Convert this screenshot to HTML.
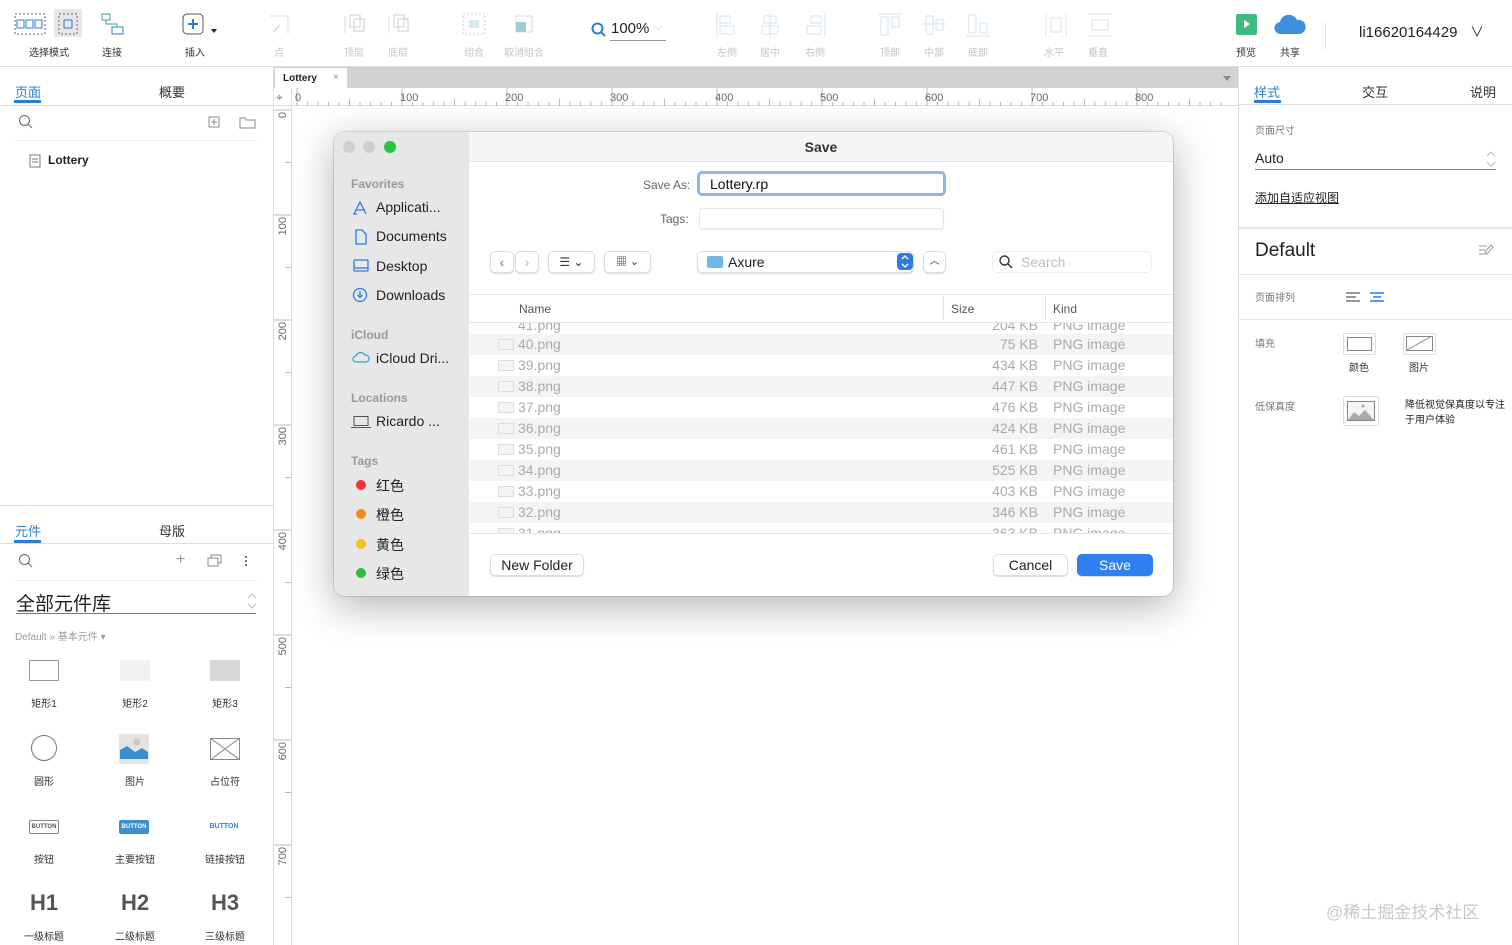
<!DOCTYPE html>
<html><head><meta charset="utf-8"><style>
*{margin:0;padding:0;box-sizing:border-box}
body{width:1512px;height:945px;overflow:hidden;background:#fff;font-family:"Liberation Sans","Noto Sans CJK SC",sans-serif;position:relative;color:#333}
.a{position:absolute}
.tl{position:absolute;font-size:10px;color:#333;text-align:center;width:60px}
.tl.g{color:#c4c4c4}
.ic{position:absolute}
.row{position:absolute;left:470px;width:703px;height:21px;font-size:14px;color:#aaa}
.row span{position:absolute;top:2px}
.row span.s{right:135px;text-align:right}
.fi{position:absolute;left:28px;top:5px;width:16px;height:11px;border:1px solid #ddd;background:#f4f4f4}
.sb{position:absolute;left:17px;font-size:14px;color:#222}
.sh{position:absolute;left:17px;font-size:12px;color:#999;font-weight:bold}
.btn{position:absolute;background:#fff;border:1px solid #ddd;border-radius:5px;box-shadow:0 1px 1px rgba(0,0,0,.15);font-size:14px;text-align:center;line-height:20px}
.lbl{position:absolute;font-size:10px;color:#333;width:60px;text-align:center}
</style></head><body>
<div class="a" style="left:0;top:0;width:1512px;height:67px;border-bottom:1px solid #ddd;background:#fff"></div>
<svg class="ic" style="left:14px;top:13px" width="32" height="22"><rect x="1" y="1" width="30" height="20" fill="none" stroke="#666" stroke-dasharray="2 2"/><rect x="3" y="7" width="7" height="8" fill="none" stroke="#2a7ed0"/><rect x="12" y="7" width="7" height="8" fill="none" stroke="#2a7ed0"/><rect x="21" y="7" width="7" height="8" fill="none" stroke="#2a7ed0"/></svg>
<div class="a" style="left:54px;top:9px;width:28px;height:28px;background:#e6e6e6"></div>
<svg class="ic" style="left:58px;top:13px" width="20" height="22"><rect x="1" y="1" width="18" height="20" fill="none" stroke="#666" stroke-dasharray="2 2"/><rect x="6" y="7" width="8" height="8" fill="none" stroke="#2a7ed0"/></svg>
<svg class="ic" style="left:101px;top:13px" width="24" height="22"><rect x="1" y="1" width="8" height="6" fill="none" stroke="#3aa67a"/><rect x="11" y="14" width="11" height="7" fill="none" stroke="#2a7ed0"/><path d="M5 7v4h11v3" fill="none" stroke="#3aa67a"/></svg>
<div class="tl" style="left:19px;top:44px">选择模式</div>
<div class="tl" style="left:82px;top:44px">连接</div>
<svg class="ic" style="left:182px;top:13px" width="40" height="22"><rect x="1" y="1" width="20" height="20" rx="4" fill="none" stroke="#555"/><path d="M11 6v10M6 11h10" stroke="#2a7ed0" stroke-width="2"/><path d="M29 16l3 4 3-4z" fill="#222"/></svg>
<div class="tl" style="left:165px;top:44px">插入</div>
<div class="tl g" style="left:249px;top:44px">点</div>
<div class="tl g" style="left:324px;top:44px">顶层</div>
<div class="tl g" style="left:368px;top:44px">底层</div>
<div class="tl g" style="left:444px;top:44px">组合</div>
<div class="tl g" style="left:494px;top:44px">取消组合</div>
<svg class="ic" style="left:268px;top:14px" width="22" height="22"><path d="M2 2h18v18" fill="none" stroke="#cde"/><path d="M5 18l7-7" stroke="#ccc"/></svg>
<svg class="ic" style="left:342px;top:13px" width="24" height="22"><path d="M3 20V3" stroke="#cde"/><rect x="8" y="2" width="10" height="12" fill="none" stroke="#ccc"/><rect x="12" y="6" width="10" height="12" fill="none" stroke="#ccc"/></svg>
<svg class="ic" style="left:386px;top:13px" width="24" height="22"><path d="M3 20V3" stroke="#cde"/><rect x="8" y="2" width="10" height="12" fill="none" stroke="#ccc"/><rect x="12" y="6" width="10" height="12" fill="none" stroke="#ccc"/></svg>
<svg class="ic" style="left:462px;top:13px" width="24" height="22"><rect x="1" y="1" width="22" height="20" fill="none" stroke="#ccc" stroke-dasharray="2 2"/><rect x="7" y="7" width="10" height="8" fill="#d7e8ef"/></svg>
<svg class="ic" style="left:512px;top:12px" width="24" height="24"><rect x="4" y="4" width="16" height="16" fill="none" stroke="#cde"/><path d="M4 10h10v10H4z" fill="#9ccfd0"/></svg>
<svg class="ic" style="left:591px;top:22px" width="16" height="16"><circle cx="6.5" cy="6.5" r="5" fill="none" stroke="#2a7ed0" stroke-width="2"/><path d="M10 10l4 4" stroke="#2a7ed0" stroke-width="2"/></svg>
<div class="a" style="left:611px;top:20px;font-size:15px;color:#222">100%</div>
<div class="a" style="left:655px;top:22px;font-size:10px;color:#bbb">⌵</div>
<div class="a" style="left:610px;top:40px;width:56px;height:1px;background:#999"></div>
<div class="tl g" style="left:697px;top:44px">左侧</div>
<div class="tl g" style="left:740px;top:44px">居中</div>
<div class="tl g" style="left:785px;top:44px">右侧</div>
<div class="tl g" style="left:860px;top:44px">顶部</div>
<div class="tl g" style="left:904px;top:44px">中部</div>
<div class="tl g" style="left:948px;top:44px">底部</div>
<div class="tl g" style="left:1024px;top:44px">水平</div>
<div class="tl g" style="left:1068px;top:44px">垂直</div>
<svg class="a" style="left:714px;top:12px" width="400" height="26" fill="none" stroke="#d3e3ee"><path d="M3 1v24M6 4h10v7H6zM6 14h14v8H6z"/><path d="M56 1v24M50 4h12v7H50zM48 14h16v8H48z"/><path d="M111 1v24M97 4h10v7H97zM93 14h14v8H93z"/><path d="M164 2h24M167 5h7v18h-7zM178 5h7v10h-7z"/><path d="M208 12h24M212 4h7v18h-7zM222 8h7v10h-7z"/><path d="M252 24h24M255 3h7v18h-7zM266 11h7v10h-7z"/><path d="M332 2v22M352 2v22M337 6h10v14h-10z"/><path d="M374 2h24M374 24h24M378 8h16v10h-16z"/></svg>
<div class="a" style="left:1236px;top:14px;width:21px;height:21px;background:#3dbb82;border-radius:2px"></div>
<div class="a" style="left:1244px;top:20px;width:0;height:0;border-left:6px solid #fff;border-top:4px solid transparent;border-bottom:4px solid transparent"></div>
<svg class="ic" style="left:1273px;top:12px" width="34" height="24"><path d="M8 22a6 6 0 0 1-1-12 9 9 0 0 1 17-2 7 7 0 0 1 3 14z" fill="#3b8fde"/></svg>
<div class="tl" style="left:1216px;top:44px">预览</div>
<div class="tl" style="left:1260px;top:44px">共享</div>
<div class="a" style="left:1325px;top:22px;width:1px;height:28px;background:#e6e6e6"></div>
<div class="a" style="left:1359px;top:24px;font-size:15px;color:#222">li16620164429</div>
<div class="a" style="left:1470px;top:22px;font-size:14px;color:#333">∨</div>

<div class="a" style="left:273px;top:67px;width:1px;height:878px;background:#ddd"></div>
<div class="a" style="left:15px;top:82px;font-size:13px;color:#2a7ed0">页面</div>
<div class="a" style="left:159px;top:82px;font-size:13px;color:#333">概要</div>
<div class="a" style="left:14px;top:100px;width:27px;height:3px;background:#2a7ed0"></div>
<div class="a" style="left:0;top:105px;width:273px;height:1px;background:#ddd"></div>
<svg class="ic" style="left:18px;top:114px" width="16" height="16"><circle cx="6.5" cy="6.5" r="5" fill="none" stroke="#666"/><path d="M10 10l4 4" stroke="#666"/></svg>
<svg class="ic" style="left:208px;top:116px" width="50" height="14" fill="none" stroke="#888"><rect x="1" y="1" width="10" height="10"/><path d="M6 3v6M3 6h6"/><path d="M32 2h5l1 2h9v8H32z"/></svg>
<div class="a" style="left:15px;top:140px;width:243px;height:1px;background:#eee"></div>
<svg class="ic" style="left:29px;top:154px" width="12" height="14" fill="none" stroke="#777"><rect x="1" y="1" width="10" height="12"/><path d="M3 5h6M3 8h6"/></svg>
<div class="a" style="left:48px;top:153px;font-size:12px;color:#222;font-weight:bold">Lottery</div>
<div class="a" style="left:0;top:505px;width:273px;height:1px;background:#ddd"></div>
<div class="a" style="left:15px;top:521px;font-size:13px;color:#2a7ed0">元件</div>
<div class="a" style="left:159px;top:521px;font-size:13px;color:#333">母版</div>
<div class="a" style="left:14px;top:540px;width:27px;height:3px;background:#2a7ed0"></div>
<div class="a" style="left:0;top:543px;width:273px;height:1px;background:#ddd"></div>
<svg class="ic" style="left:18px;top:553px" width="16" height="16"><circle cx="6.5" cy="6.5" r="5" fill="none" stroke="#666"/><path d="M10 10l4 4" stroke="#666"/></svg>
<div class="a" style="left:176px;top:551px;font-size:16px;color:#999">+</div>
<svg class="ic" style="left:207px;top:554px" width="16" height="14" fill="none" stroke="#888"><rect x="1" y="4" width="10" height="8"/><path d="M4 4V1h10v8h-3"/></svg>
<div class="a" style="left:245px;top:556px;width:2px;height:2px;background:#777;box-shadow:0 4px #777,0 8px #777"></div>
<div class="a" style="left:15px;top:580px;width:243px;height:1px;background:#f0f0f0"></div>
<div class="a" style="left:16px;top:589px;font-size:19px;color:#222">全部元件库</div>
<svg class="ic" style="left:247px;top:593px" width="10" height="16" fill="none" stroke="#bbb"><path d="M1 5l4-4 4 4M1 11l4 4 4-4"/></svg>
<div class="a" style="left:16px;top:613px;width:240px;height:1px;background:#777"></div>
<div class="a" style="left:15px;top:628px;font-size:10px;color:#999">Default » 基本元件 ▾</div>
<div class="a" style="left:29px;top:660px;width:30px;height:21px;border:1px solid #999"></div>
<div class="a" style="left:120px;top:660px;width:30px;height:21px;background:#f2f2f2"></div>
<div class="a" style="left:210px;top:660px;width:30px;height:21px;background:#d8d8d8"></div>
<div class="lbl" style="left:14px;top:695px">矩形1</div><div class="lbl" style="left:105px;top:695px">矩形2</div><div class="lbl" style="left:195px;top:695px">矩形3</div>
<div class="a" style="left:31px;top:735px;width:26px;height:26px;border:1px solid #777;border-radius:50%"></div>
<svg class="ic" style="left:119px;top:734px" width="30" height="30"><rect width="30" height="30" fill="#e4e4e4"/><path d="M1 25V16l7-4 8 6 7-4 6 4v7z" fill="#3b8fd0"/><circle cx="18" cy="8" r="3.5" fill="#c8c8c8"/></svg>
<svg class="ic" style="left:210px;top:738px" width="30" height="22" fill="none" stroke="#888"><rect x=".5" y=".5" width="29" height="21"/><path d="M0 0l30 22M30 0L0 22"/></svg>
<div class="lbl" style="left:14px;top:773px">圆形</div><div class="lbl" style="left:105px;top:773px">图片</div><div class="lbl" style="left:195px;top:773px">占位符</div>
<div class="a" style="left:29px;top:820px;width:30px;height:14px;border:1px solid #888;border-radius:2px;font-size:6px;text-align:center;line-height:12px;color:#555;font-weight:bold">BUTTON</div>
<div class="a" style="left:119px;top:820px;width:30px;height:14px;background:#3b8fd0;border-radius:2px;font-size:6px;text-align:center;line-height:14px;color:#fff;font-weight:bold">BUTTON</div>
<div class="a" style="left:209px;top:820px;width:30px;height:14px;font-size:7px;text-align:center;line-height:14px;color:#3b7ec6;font-weight:bold">BUTTON</div>
<div class="lbl" style="left:14px;top:851px">按钮</div><div class="lbl" style="left:105px;top:851px">主要按钮</div><div class="lbl" style="left:195px;top:851px">链接按钮</div>
<div class="a" style="left:14px;top:890px;width:60px;text-align:center;font-size:22px;font-weight:bold;color:#555">H1</div>
<div class="a" style="left:105px;top:890px;width:60px;text-align:center;font-size:22px;font-weight:bold;color:#555">H2</div>
<div class="a" style="left:195px;top:890px;width:60px;text-align:center;font-size:22px;font-weight:bold;color:#555">H3</div>
<div class="lbl" style="left:14px;top:928px">一级标题</div><div class="lbl" style="left:105px;top:928px">二级标题</div><div class="lbl" style="left:195px;top:928px">三级标题</div>

<div class="a" style="left:274px;top:67px;width:964px;height:21px;background:#d2d2d2"></div>
<div class="a" style="left:275px;top:68px;width:72px;height:20px;background:#fff;font-size:10px;font-weight:bold;color:#222;padding:5px 0 0 8px">Lottery<span style="position:absolute;left:58px;top:4px;font-weight:normal;color:#888">×</span></div>
<div class="a" style="left:1223px;top:76px;width:0;height:0;border-top:5px solid #888;border-left:4px solid transparent;border-right:4px solid transparent"></div>
<div class="a" style="left:274px;top:88px;width:964px;height:18px;background:#fff;border-bottom:1px solid #ddd"></div>
<div class="a" style="left:291px;top:88px;width:1px;height:857px;background:#ddd"></div>
<div class="a" style="left:276px;top:90px;font-size:12px;color:#777">⌖</div>
<svg class="a" style="left:292px;top:88px" width="946" height="18"><g stroke="#bbb">
<path d="M5 0v18M110 0v18M215 0v18M320 0v18M425 0v18M530 0v18M635 0v18M740 0v18M845 0v18"/>
<path d="M15.5 14v4M26 14v4M36.5 14v4M47 14v4M68 14v4M78.5 14v4M89 14v4M99.5 14v4M57.5 11v7M120.5 14v4M131 14v4M141.5 14v4M152 14v4M162.5 11v7M173 14v4M183.5 14v4M194 14v4M204.5 14v4M225.5 14v4M236 14v4M246.5 14v4M257 14v4M267.5 11v7M278 14v4M288.5 14v4M299 14v4M309.5 14v4M330.5 14v4M341 14v4M351.5 14v4M362 14v4M372.5 11v7M383 14v4M393.5 14v4M404 14v4M414.5 14v4M435.5 14v4M446 14v4M456.5 14v4M467 14v4M477.5 11v7M488 14v4M498.5 14v4M509 14v4M519.5 14v4M540.5 14v4M551 14v4M561.5 14v4M572 14v4M582.5 11v7M593 14v4M603.5 14v4M614 14v4M624.5 14v4M645.5 14v4M656 14v4M666.5 14v4M677 14v4M687.5 11v7M698 14v4M708.5 14v4M719 14v4M729.5 14v4M750.5 14v4M761 14v4M771.5 14v4M782 14v4M792.5 11v7M803 14v4M813.5 14v4M824 14v4M834.5 14v4M855.5 14v4M866 14v4M876.5 14v4M887 14v4M897.5 11v7M908 14v4M918.5 14v4M929 14v4"/></g>
<g font-size="11" fill="#666" font-family="Liberation Sans"><text x="3" y="13">0</text><text x="108" y="13">100</text><text x="213" y="13">200</text><text x="318" y="13">300</text><text x="423" y="13">400</text><text x="528" y="13">500</text><text x="633" y="13">600</text><text x="738" y="13">700</text><text x="843" y="13">800</text></g></svg>
<svg class="a" style="left:274px;top:106px" width="17" height="839"><g stroke="#bbb"><path d="M0 4h17M0 109h17M0 214h17M0 319h17M0 424h17M0 529h17M0 634h17M0 739h17"/><path d="M11 56.5h6M11 161.5h6M11 266.5h6M11 371.5h6M11 476.5h6M11 581.5h6M11 686.5h6M11 791.5h6"/></g>
<g font-size="11" fill="#666" font-family="Liberation Sans"><text transform="translate(12 6) rotate(-90)" text-anchor="end">0</text><text transform="translate(12 111) rotate(-90)" text-anchor="end">100</text><text transform="translate(12 216) rotate(-90)" text-anchor="end">200</text><text transform="translate(12 321) rotate(-90)" text-anchor="end">300</text><text transform="translate(12 426) rotate(-90)" text-anchor="end">400</text><text transform="translate(12 531) rotate(-90)" text-anchor="end">500</text><text transform="translate(12 636) rotate(-90)" text-anchor="end">600</text><text transform="translate(12 741) rotate(-90)" text-anchor="end">700</text></g></svg>

<div class="a" style="left:1238px;top:67px;width:1px;height:878px;background:#ddd"></div>
<div class="a" style="left:1254px;top:82px;font-size:13px;color:#2a7ed0">样式</div>
<div class="a" style="left:1362px;top:82px;font-size:13px;color:#333">交互</div>
<div class="a" style="left:1470px;top:82px;font-size:13px;color:#333">说明</div>
<div class="a" style="left:1254px;top:100px;width:27px;height:3px;background:#2a7ed0"></div>
<div class="a" style="left:1239px;top:104px;width:273px;height:1px;background:#ddd"></div>
<div class="a" style="left:1255px;top:122px;font-size:10px;color:#777">页面尺寸</div>
<div class="a" style="left:1255px;top:150px;font-size:14px;color:#222">Auto</div>
<svg class="ic" style="left:1486px;top:151px" width="10" height="16" fill="none" stroke="#bbb"><path d="M1 5l4-4 4 4M1 11l4 4 4-4"/></svg>
<div class="a" style="left:1255px;top:169px;width:241px;height:1px;background:#888"></div>
<div class="a" style="left:1255px;top:189px;font-size:12px;color:#222;text-decoration:underline">添加自适应视图</div>
<div class="a" style="left:1239px;top:227px;width:273px;height:2px;background:#e6e6e6"></div>
<div class="a" style="left:1255px;top:240px;font-size:19px;color:#222">Default</div>
<svg class="ic" style="left:1478px;top:243px" width="16" height="14" fill="none" stroke="#999"><path d="M1 3h8M1 7h6M1 11h7"/><path d="M9 11l6-7-2-2-6 7z"/></svg>
<div class="a" style="left:1239px;top:274px;width:273px;height:1px;background:#e6e6e6"></div>
<div class="a" style="left:1255px;top:289px;font-size:10px;color:#777">页面排列</div>
<svg class="ic" style="left:1345px;top:292px" width="42" height="12"><path d="M1 1h14M1 5h10M1 9h14" stroke="#777" stroke-width="1.5"/><path d="M25 1h14M28 5h8M25 9h14" stroke="#2a7ed0" stroke-width="1.5"/></svg>
<div class="a" style="left:1239px;top:319px;width:273px;height:1px;background:#e6e6e6"></div>
<div class="a" style="left:1255px;top:335px;font-size:10px;color:#777">填充</div>
<div class="a" style="left:1343px;top:333px;width:33px;height:22px;border:1px solid #ddd;border-radius:2px;background:#fff"><div style="margin:3px;height:14px;border:1px solid #888"></div></div>
<svg class="ic" style="left:1403px;top:333px" width="33" height="22"><rect x=".5" y=".5" width="32" height="21" rx="2" fill="#fff" stroke="#ddd"/><rect x="3.5" y="3.5" width="26" height="14" fill="none" stroke="#888"/><path d="M4 17l25-14" stroke="#888"/></svg>
<div class="a" style="left:1349px;top:359px;font-size:10px;color:#333">颜色</div>
<div class="a" style="left:1409px;top:359px;font-size:10px;color:#333">图片</div>
<div class="a" style="left:1255px;top:398px;font-size:10px;color:#777">低保真度</div>
<svg class="ic" style="left:1343px;top:396px" width="36" height="30"><rect x=".5" y=".5" width="35" height="29" rx="2" fill="#fff" stroke="#ddd"/><rect x="4.5" y="5.5" width="27" height="19" fill="#f4f4f4" stroke="#888"/><path d="M5 24l6-8 5 4 6-6 9 10z" fill="#aaa"/><circle cx="20" cy="10" r="1.5" fill="#aaa"/></svg>
<div class="a" style="left:1405px;top:398px;font-size:10px;color:#222;line-height:15px">降低视觉保真度以专注<br>于用户体验</div>
<div class="a" style="left:1326px;top:898px;font-size:17px;color:#c8c8c8">@稀土掘金技术社区</div>

<div class="a" style="left:334px;top:132px;width:839px;height:464px;border-radius:10px;background:#fff;box-shadow:0 10px 40px rgba(0,0,0,.3),0 0 0 1px rgba(0,0,0,.12);overflow:hidden">
 <div class="a" style="left:0;top:0;width:135px;height:464px;background:#e7e7e7"></div>
 <div class="a" style="left:135px;top:0;width:704px;height:30px;background:#f5f5f5;border-bottom:1px solid #e2e2e2;text-align:center;font-size:14px;font-weight:bold;line-height:30px;color:#333">Save</div>
 <div class="a" style="left:9px;top:9px;width:12px;height:12px;border-radius:50%;background:#cfcfcf"></div>
 <div class="a" style="left:29px;top:9px;width:12px;height:12px;border-radius:50%;background:#cfcfcf"></div>
 <div class="a" style="left:50px;top:9px;width:12px;height:12px;border-radius:50%;background:#2cc140"></div>
 <div class="sh" style="top:45px">Favorites</div>
 <div class="sb" style="left:42px;top:67px">Applicati...</div>
 <div class="sb" style="left:42px;top:96px">Documents</div>
 <div class="sb" style="left:42px;top:126px">Desktop</div>
 <div class="sb" style="left:42px;top:155px">Downloads</div>
 <svg class="a" style="left:18px;top:67px" width="18" height="120" fill="none" stroke="#2f7be3" stroke-width="1.3"><path d="M2 15l6-12 6 12M4 11h9M1 15h4"/><path d="M4 31h6l4 4v10H4z"/><rect x="2" y="61" width="14" height="11" rx="1"/><path d="M2 69h14"/><circle cx="8" cy="96" r="6.5"/><path d="M8 92v6M5.5 96l2.5 2.5 2.5-2.5"/></svg>
 <div class="sh" style="top:196px">iCloud</div>
 <svg class="a" style="left:18px;top:218px" width="18" height="14" fill="none" stroke="#3aa0c8" stroke-width="1.2"><path d="M4 12a3 3 0 0 1 0-6 5 5 0 0 1 9-1 3.5 3.5 0 0 1 1 7z"/></svg>
 <div class="sb" style="left:42px;top:218px">iCloud Dri...</div>
 <div class="sh" style="top:259px">Locations</div>
 <svg class="a" style="left:17px;top:283px" width="20" height="14" fill="none" stroke="#555"><rect x="3" y="1.5" width="14" height="9"/><path d="M0 12.5h20"/></svg>
 <div class="sb" style="left:42px;top:281px">Ricardo ...</div>
 <div class="sh" style="top:322px">Tags</div>
 <div class="a" style="left:22px;top:348px;width:10px;height:10px;border-radius:50%;background:#f0332c"></div>
 <div class="a" style="left:22px;top:377px;width:10px;height:10px;border-radius:50%;background:#f08c1c"></div>
 <div class="a" style="left:22px;top:407px;width:10px;height:10px;border-radius:50%;background:#f6c21b"></div>
 <div class="a" style="left:22px;top:436px;width:10px;height:10px;border-radius:50%;background:#2ebd3a"></div>
 <div class="sb" style="left:42px;top:344px">红色</div>
 <div class="sb" style="left:42px;top:373px">橙色</div>
 <div class="sb" style="left:42px;top:403px">黄色</div>
 <div class="sb" style="left:42px;top:432px">绿色</div>
 <div class="a" style="left:309px;top:46px;font-size:12px;color:#666">Save As:</div>
 <div class="a" style="left:363px;top:39px;width:249px;height:25px;border:3px solid #8fb7ee;border-radius:5px;font-size:14px;color:#111;padding:2px 0 0 10px">Lottery.rp</div>
 <div class="a" style="left:326px;top:80px;font-size:12px;color:#666">Tags:</div>
 <div class="a" style="left:365px;top:76px;width:245px;height:21px;border:1px solid #e6e6e6;border-radius:3px;box-shadow:0 1px 1px rgba(0,0,0,.08)"></div>
 <div class="btn" style="left:156px;top:119px;width:24px;height:22px;color:#777">‹</div>
 <div class="btn" style="left:181px;top:119px;width:24px;height:22px;color:#bbb">›</div>
 <div class="btn" style="left:214px;top:119px;width:47px;height:22px;font-size:12px">☰ ⌄</div>
 <div class="btn" style="left:270px;top:119px;width:47px;height:22px;font-size:11px">▦ ⌄</div>
 <div class="btn" style="left:363px;top:119px;width:217px;height:22px;text-align:left;padding-left:30px;color:#222">Axure</div>
 <div class="a" style="left:373px;top:124px;width:16px;height:12px;background:#72b6ea;border-radius:2px"></div>
 <div class="a" style="left:563px;top:121px;width:16px;height:17px;background:#2f7be3;border-radius:4px"></div>
 <svg class="a" style="left:567px;top:123px" width="8" height="13" fill="none" stroke="#fff" stroke-width="1.3"><path d="M1 4l3-3 3 3M1 9l3 3 3-3"/></svg>
 <div class="btn" style="left:589px;top:119px;width:23px;height:22px;font-size:10px">︿</div>
 <div class="btn" style="left:658px;top:119px;width:160px;height:22px;text-align:left;padding-left:28px;color:#bbb;box-shadow:none;border-color:#eee">Search</div>
 <svg class="a" style="left:665px;top:123px" width="14" height="14" fill="none" stroke="#333" stroke-width="1.4"><circle cx="5.5" cy="5.5" r="4.5"/><path d="M9 9l4 4"/></svg>
 <div class="a" style="left:135px;top:162px;width:704px;height:1px;background:#e4e4e4"></div>
 <div class="a" style="left:185px;top:170px;font-size:12px;color:#555">Name</div>
 <div class="a" style="left:609px;top:164px;width:1px;height:24px;background:#e4e4e4"></div>
 <div class="a" style="left:617px;top:170px;font-size:12px;color:#555">Size</div>
 <div class="a" style="left:711px;top:164px;width:1px;height:24px;background:#e4e4e4"></div>
 <div class="a" style="left:719px;top:170px;font-size:12px;color:#555">Kind</div>
 <div class="a" style="left:135px;top:190px;width:704px;height:1px;background:#e4e4e4"></div>
</div>
<div style="position:absolute;left:470px;top:323px;width:703px;height:210px;overflow:hidden">
<div class="row" style="left:0;top:-8px"><span style="left:48px">41.png</span><span class="s">204 KB</span><span style="left:583px">PNG image</span></div>
<div class="row" style="left:0;top:11px;background:#f4f4f4"><div class="fi"></div><span style="left:48px">40.png</span><span class="s">75 KB</span><span style="left:583px">PNG image</span></div>
<div class="row" style="left:0;top:32px"><div class="fi"></div><span style="left:48px">39.png</span><span class="s">434 KB</span><span style="left:583px">PNG image</span></div>
<div class="row" style="left:0;top:53px;background:#f4f4f4"><div class="fi"></div><span style="left:48px">38.png</span><span class="s">447 KB</span><span style="left:583px">PNG image</span></div>
<div class="row" style="left:0;top:74px"><div class="fi"></div><span style="left:48px">37.png</span><span class="s">476 KB</span><span style="left:583px">PNG image</span></div>
<div class="row" style="left:0;top:95px;background:#f4f4f4"><div class="fi"></div><span style="left:48px">36.png</span><span class="s">424 KB</span><span style="left:583px">PNG image</span></div>
<div class="row" style="left:0;top:116px"><div class="fi"></div><span style="left:48px">35.png</span><span class="s">461 KB</span><span style="left:583px">PNG image</span></div>
<div class="row" style="left:0;top:137px;background:#f4f4f4"><div class="fi"></div><span style="left:48px">34.png</span><span class="s">525 KB</span><span style="left:583px">PNG image</span></div>
<div class="row" style="left:0;top:158px"><div class="fi"></div><span style="left:48px">33.png</span><span class="s">403 KB</span><span style="left:583px">PNG image</span></div>
<div class="row" style="left:0;top:179px;background:#f4f4f4"><div class="fi"></div><span style="left:48px">32.png</span><span class="s">346 KB</span><span style="left:583px">PNG image</span></div>
<div class="row" style="left:0;top:200px"><div class="fi"></div><span style="left:48px">31.png</span><span class="s">363 KB</span><span style="left:583px">PNG image</span></div>
</div>
<div class="a" style="left:470px;top:533px;width:703px;height:1px;background:#e4e4e4"></div>
<div class="btn" style="left:490px;top:554px;width:94px;height:22px;color:#222">New Folder</div>
<div class="btn" style="left:993px;top:554px;width:75px;height:22px;color:#222">Cancel</div>
<div class="btn" style="left:1077px;top:554px;width:76px;height:22px;background:#2f80f0;border-color:#2f80f0;color:#fff">Save</div>
</body></html>
